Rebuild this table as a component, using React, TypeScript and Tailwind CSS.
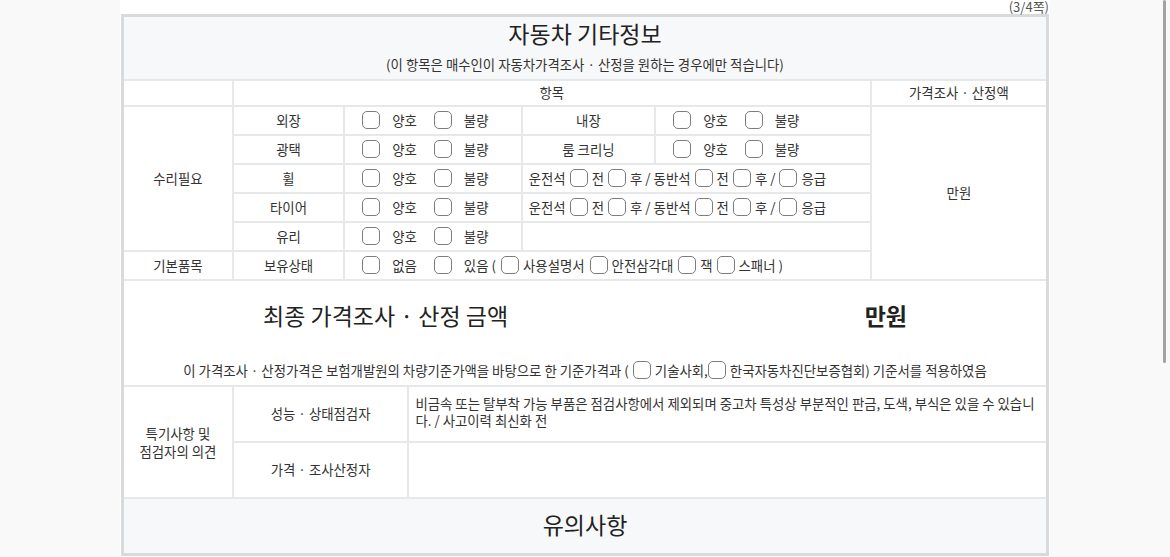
import React from "react";

const Box = ({ className = "" }: { className?: string }) => (
  <span
    className={`inline-block w-[18px] h-[18px] shrink-0 rounded-[5px] border-[1.5px] border-[#7d7d7d] bg-white ${className}`}
  />
);

// 양호 / 불량 pair
const GoodBad = ({ a = "양호", b = "불량" }: { a?: string; b?: string }) => (
  <div className="flex items-center pl-[17px]">
    <Box />
    <span className="ml-[12px]">{a}</span>
    <Box className="ml-[17px]" />
    <span className="ml-[12px]">{b}</span>
  </div>
);

const Seats = () => (
  <div className="flex items-center gap-[4px] pl-[6px]">
    <span>운전석</span>
    <Box />
    <span>전</span>
    <Box />
    <span>후 / 동반석</span>
    <Box />
    <span>전</span>
    <Box />
    <span>후 /</span>
    <Box />
    <span>응급</span>
  </div>
);

const td = "border-2 border-[#e7e8ea] p-0";
const row = "h-[29px]";

export default function App() {
  return (
    <div className="relative min-h-screen bg-[#f9f9f9] font-['Noto_Sans_CJK_KR','Noto_Sans',sans-serif] text-[#333]">
      <div className="mx-auto w-[930px] min-h-[557px] bg-white px-px">
        <div className="h-[14px] flex justify-end items-center text-[13px] text-[#555]">
          <span className="leading-[14px]">(3/4쪽)</span>
        </div>

        <table className="w-[928px] table-fixed border-collapse border-[3px] border-[#d9dadc] text-[13.4px] text-center">
          <colgroup>
            <col className="w-[110px]" />
            <col className="w-[111px]" />
            <col className="w-[64px]" />
            <col className="w-[113px]" />
            <col className="w-[133px]" />
            <col className="w-[215px]" />
            <col className="w-[176px]" />
          </colgroup>
          <tbody>
            <tr>
              <td colSpan={7} className={`${td} h-[64px] bg-[#f7f8f9] align-top`}>
                <div className="text-[23px] leading-[32px] text-[#222]">자동차 기타정보</div>
                <div className="mt-[5px] leading-[20px]">
                  (이 항목은 매수인이 자동차가격조사 · 산정을 원하는 경우에만 적습니다)
                </div>
              </td>
            </tr>
            <tr>
              <td className={`${td} h-[26px]`} />
              <td colSpan={5} className={td}>항목</td>
              <td className={td}>가격조사 · 산정액</td>
            </tr>

            <tr className={row}>
              <td rowSpan={5} className={td}>수리필요</td>
              <td className={td}>외장</td>
              <td colSpan={2} className={td}><GoodBad /></td>
              <td className={td}>내장</td>
              <td className={td}><GoodBad /></td>
              <td rowSpan={6} className={td}>만원</td>
            </tr>
            <tr className={row}>
              <td className={td}>광택</td>
              <td colSpan={2} className={td}><GoodBad /></td>
              <td className={td}>룸 크리닝</td>
              <td className={td}><GoodBad /></td>
            </tr>
            <tr className={row}>
              <td className={td}>휠</td>
              <td colSpan={2} className={td}><GoodBad /></td>
              <td colSpan={2} className={td}><Seats /></td>
            </tr>
            <tr className={row}>
              <td className={td}>타이어</td>
              <td colSpan={2} className={td}><GoodBad /></td>
              <td colSpan={2} className={td}><Seats /></td>
            </tr>
            <tr className={row}>
              <td className={td}>유리</td>
              <td colSpan={2} className={td}><GoodBad /></td>
              <td colSpan={2} className={td} />
            </tr>
            <tr className={row}>
              <td className={td}>기본품목</td>
              <td className={td}>보유상태</td>
              <td colSpan={4} className={td}>
                <div className="flex items-center pl-[17px]">
                  <Box />
                  <span className="ml-[12px]">없음</span>
                  <Box className="ml-[17px]" />
                  <span className="ml-[12px]">있음 (</span>
                  <Box className="ml-[5px]" />
                  <span className="ml-[4px]">사용설명서</span>
                  <Box className="ml-[5px]" />
                  <span className="ml-[4px]">안전삼각대</span>
                  <Box className="ml-[5px]" />
                  <span className="ml-[4px]">잭</span>
                  <Box className="ml-[4px]" />
                  <span className="ml-[4px]">스패너 )</span>
                </div>
              </td>
            </tr>

            <tr>
              <td colSpan={7} className={`${td} h-[106px] align-top`}>
                <div className="flex justify-between px-[139px] pt-[17px] text-[23px] leading-[34px] text-[#222]">
                  <span>최종 가격조사 · 산정 금액</span>
                  <span className="font-bold">만원</span>
                </div>
                <div className="mt-[28px] flex items-center justify-center leading-[20px]">
                  <span>이 가격조사 · 산정가격은 보험개발원의 차량기준가액을 바탕으로 한 기준가격과 (</span>
                  <Box className="ml-[4px]" />
                  <span className="ml-[4px]">기술사회,</span>
                  <Box />
                  <span className="ml-[4px]">한국자동차진단보증협회) 기준서를 적용하였음</span>
                </div>
              </td>
            </tr>

            <tr className="h-[56px]">
              <td rowSpan={2} className={`${td} leading-[18px]`}>
                특기사항 및<br />점검자의 의견
              </td>
              <td colSpan={2} className={td}>성능 · 상태점검자</td>
              <td colSpan={4} className={`${td} align-top text-left pl-[6px] pr-[6px] pt-[8px] leading-[17px] break-all`}>
                비금속 또는 탈부착 가능 부품은 점검사항에서 제외되며 중고차 특성상 부분적인 판금, 도색, 부식은 있을 수 있습니다. / 사고이력 최신화 전
              </td>
            </tr>
            <tr className="h-[56px]">
              <td colSpan={2} className={td}>가격 · 조사산정자</td>
              <td colSpan={4} className={td} />
            </tr>

            <tr>
              <td colSpan={7} className={`${td} h-[57px] bg-[#f7f8f9] align-top pt-[8px] text-[23px] leading-[34px] text-[#222]`}>
                유의사항
              </td>
            </tr>
          </tbody>
        </table>
      </div>

      <div className="absolute right-[4px] top-0 w-[3px] h-[363px] rounded-full bg-[#a3a3a3]" />
    </div>
  );
}
